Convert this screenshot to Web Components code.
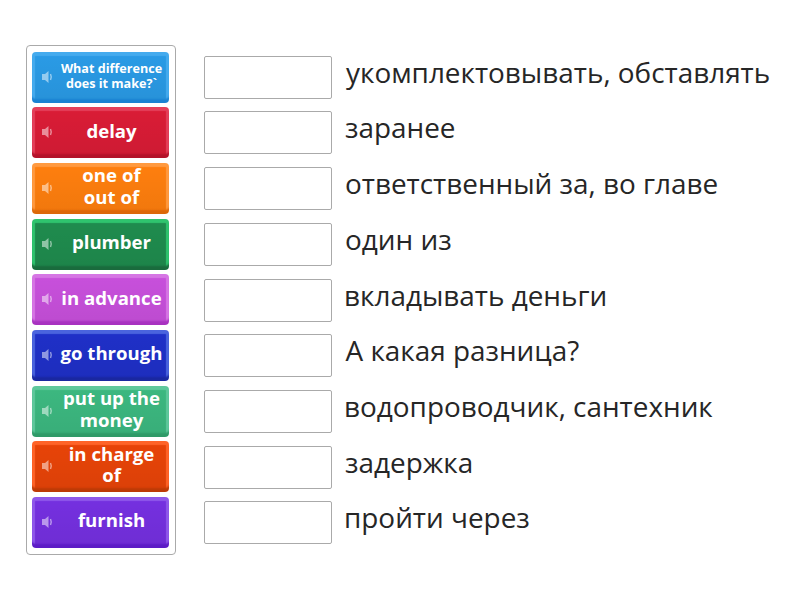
<!DOCTYPE html>
<html>
<head>
<meta charset="utf-8">
<style>
    html, body { margin: 0; height: 100%; background: #fff; }
    body { font-family: "Open Sans", "Liberation Sans", sans-serif; }
</style>
</head>
<body>
<match-game></match-game>
<script>
// text, top strip, face, bottom strip
const tiles = [
    ["What difference does it make?`", "#45abee", "#2a9be6", "#1a82d2", true],
    ["delay", "#e4405a", "#da1c36", "#b3122a"],
    ["one&nbsp;of out&nbsp;of", "#ff9a40", "#ff7f0e", "#dc6808"],
    ["plumber", "#2fc46e", "#1f8c4e", "#1a6b3d"],
    ["in advance", "#d676e4", "#c850dc", "#a832c0"],
    ["go through", "#4a64de", "#1f30c8", "#1a28a0"],
    ["put up the money", "#5fc89c", "#3cb880", "#2f9a68"],
    ["in charge of", "#ff6428", "#e84408", "#bd3a06"],
    ["furnish", "#8f58ea", "#7530e0", "#5c1cc6"]
]

// text, small nudge to the left edge
const answers = [
    ["укомплектовывать, обставлять", 1],
    ["заранее", 0],
    ["ответственный за, во главе", 0],
    ["один из", 0],
    ["вкладывать деньги", -1],
    ["А какая разница?", 0.5],
    ["водопроводчик, сантехник", -1],
    ["задержка", 0],
    ["пройти через", -1]
]

class wordTile extends HTMLElement {
    connectedCallback() {
        this.attachShadow({ mode: "open" })
        this.shadowRoot.innerHTML = `
            <style>
                :host {
                    display: flex;
                    align-items: center;
                    height: 51px;
                    box-sizing: border-box;
                    border-radius: 4px;
                    color: #fff;
                    background: linear-gradient(transparent, rgba(0,0,0,.06)), var(--face);
                    box-shadow: inset 0 5px 1px -1px var(--top), inset 0 -5px 2px -1px var(--bottom),
                        inset 4px 0 1px -1px var(--top), inset -4px 0 1px -1px var(--top);
                    padding: 0 5px 1px 9px;
                }
                svg { width: 13px; height: 12px; flex: none; opacity: .5; }
                div {
                    flex: 1;
                    text-align: center;
                    font-weight: 700;
                    font-size: 18.6px;
                    line-height: 21.5px;
                    margin-left: 5px;
                    padding-bottom: 4px;
                }
                :host([small]) div { font-size: 12.6px; line-height: 15px; padding-bottom: 2px; }
            </style>
            <svg viewBox="0 0 13 12"><path fill="#fff" d="M1 3h3l3.500-3v12l-3.500-3H1z"/><path fill="none" stroke="#fff" stroke-width="1.500" d="M9.500 3q1.500 3 0 6"/></svg>
            <div><slot></slot></div>
        `
    }
}

class dropBox extends HTMLElement {
    connectedCallback() {
        this.attachShadow({ mode: "open" })
        this.shadowRoot.innerHTML = `
            <style>
                :host {
                    display: grid;
                    grid-template-columns: 128px 1fr;
                    column-gap: 13px;
                    align-items: center;
                    height: 43px;
                    font-size: 27.900px;
                    color: #262626;
                    white-space: nowrap;
                }
                i { display: block; height: 43px; box-sizing: border-box; background: #fff; border: 1px solid #aaa; border-radius: 2px; }
                span { line-height: 30px; padding-bottom: 11px; margin-left: var(--nudge, 0); }
            </style>
            <i></i><span><slot></slot></span>
        `
    }
}

class matchGame extends HTMLElement {
    connectedCallback() {
        this.attachShadow({ mode: "open" })
        this.shadowRoot.innerHTML = `
            <style>
                :host { display: flex; align-items: flex-start; padding: 45px 0 0 26px; gap: 28px; }
                .panel {
                    box-sizing: border-box;
                    width: 150px;
                    height: 510px;
                    padding: 5.700px 6px 0 5px;
                    border: 1px solid #aaa;
                    border-radius: 4px;
                    display: flex;
                    flex-direction: column;
                    gap: 4.650px;
                }
                .list { display: flex; flex-direction: column; gap: 12.700px; padding-top: 10.750px; }
            </style>
            <div class="panel"></div>
            <div class="list"></div>
        `
        const panel = this.shadowRoot.querySelector(".panel")
        tiles.forEach(t => {
            const el = document.createElement("word-tile")
            el.innerHTML = t[0]
            el.style.setProperty("--top", t[1])
            el.style.setProperty("--face", t[2])
            el.style.setProperty("--bottom", t[3])
            if(t[4]) el.setAttribute("small", "")
            panel.appendChild(el)
        })
        const list = this.shadowRoot.querySelector(".list")
        answers.forEach(a => {
            const el = document.createElement("drop-box")
            el.textContent = a[0]
            el.style.setProperty("--nudge", a[1] + "px")
            list.appendChild(el)
        })
    }
}

customElements.define("word-tile", wordTile)
customElements.define("drop-box", dropBox)
customElements.define("match-game", matchGame)
</script>
</body>
</html>
